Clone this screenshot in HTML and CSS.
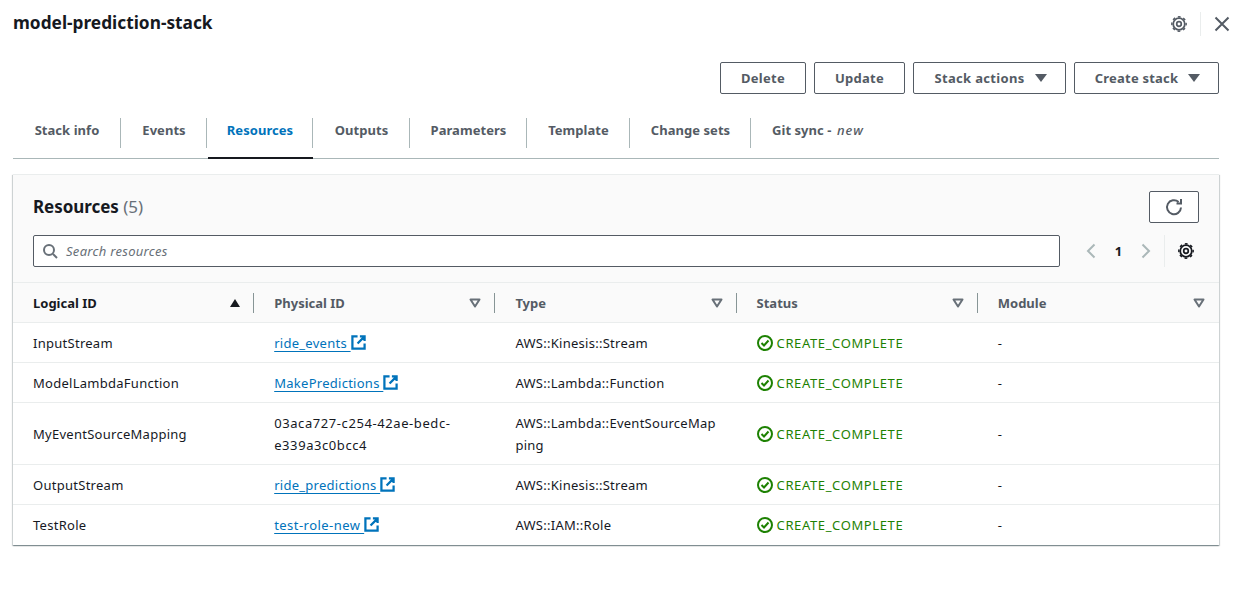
FILE: index.html
```html
<!DOCTYPE html>
<html lang="en">
  <head>
    <meta charset="utf-8" />
    <title>model-prediction-stack</title>
    <link rel="stylesheet" href="styles.css">
  </head>
  <body>
    <svg class="defs" width="0" height="0">
      <symbol id="gear" viewBox="0 0 16 16">
        <circle cx="8" cy="8" r="5.800" fill="none" stroke="currentColor" stroke-width="1.800"/>
        <circle cx="8" cy="8" r="7.200" fill="none" stroke="currentColor" stroke-width="1.400" stroke-dasharray="2.800 2.855" stroke-dashoffset="1.400"/>
        <circle cx="8" cy="8" r="2.300" fill="none" stroke="currentColor" stroke-width="1.700"/>
      </symbol>
      <symbol id="external" viewBox="0 0 16 16">
        <path d="M7 1.500H1.500v13h13V9M9.500 1.500h5v5M14 2L7 9" fill="none" stroke="currentColor" stroke-width="2.400"/>
      </symbol>
      <symbol id="status-ok" viewBox="0 0 16 16">
        <circle cx="8" cy="8" r="7" fill="none" stroke="currentColor" stroke-width="2"/>
        <path d="M4.500 8l2.500 2.500 4.500-5" fill="none" stroke="currentColor" stroke-width="2"/>
      </symbol>
      <symbol id="filter" viewBox="0 0 12 10">
        <path d="M1.500 1.500h9L6 8.500z" fill="none" stroke="currentColor" stroke-width="2" stroke-linejoin="round"/>
      </symbol>
    </svg>

    <main class="page">
      <header class="top">
        <h1>model-prediction-stack</h1>
        <div class="top-icons">
          <svg class="icon-16"><use href="#gear"/></svg>
          <span class="top-sep"></span>
          <svg class="close" viewBox="0 0 16 16"><path d="M1.500 1.500l13 13M14.500 1.500l-13 13" fill="none" stroke="currentColor" stroke-width="2"/></svg>
        </div>
      </header>

      <div class="actions">
        <button class="btn btn-delete">Delete</button>
        <button class="btn btn-update">Update</button>
        <button class="btn btn-stack">Stack actions <span class="caret"></span></button>
        <button class="btn btn-create">Create stack <span class="caret"></span></button>
      </div>

      <nav class="tabs">
        <a class="tab" style="width:108px">Stack info</a>
        <a class="tab" style="width:86px">Events</a>
        <a class="tab active" style="width:106px">Resources</a>
        <a class="tab" style="width:97px">Outputs</a>
        <a class="tab" style="width:117px">Parameters</a>
        <a class="tab" style="width:103px">Template</a>
        <a class="tab" style="width:121px">Change sets</a>
        <a class="tab">Git sync - <em>new</em></a>
      </nav>

      <section class="card">
        <div class="card-head">
          <div class="title-row">
            <h2>Resources <span class="count">(5)</span></h2>
            <button class="btn-refresh">
              <svg class="refresh" viewBox="0 0 18 18"><path d="M16 9.500a7 7 0 1 1-2.400-5.600M16 1v4.500h-4.500" fill="none" stroke="currentColor" stroke-width="2"/></svg>
            </button>
          </div>
          <div class="search-row">
            <label class="search">
              <svg class="search-icon" viewBox="0 0 16 16"><circle cx="7" cy="7" r="5" fill="none" stroke="currentColor" stroke-width="2"/><path d="M11 11l4 4" fill="none" stroke="currentColor" stroke-width="2"/></svg>
              <span>Search resources</span>
            </label>
            <div class="pager">
              <svg class="chevron" viewBox="0 0 10 16"><path d="M8.500 1.500L2 8l6.500 6.500" fill="none" stroke="currentColor" stroke-width="2"/></svg>
              <b>1</b>
              <svg class="chevron" viewBox="0 0 10 16"><path d="M1.500 1.500L8 8l-6.500 6.500" fill="none" stroke="currentColor" stroke-width="2"/></svg>
              <span class="pager-sep"></span>
              <svg class="icon-16"><use href="#gear"/></svg>
            </div>
          </div>
        </div>

        <table class="resources">
          <thead>
            <tr>
              <th class="sorted"><div>Logical ID <span class="sort-up"></span></div></th>
              <th><div>Physical ID <svg class="filter"><use href="#filter"/></svg></div></th>
              <th><div>Type <svg class="filter"><use href="#filter"/></svg></div></th>
              <th><div>Status <svg class="filter"><use href="#filter"/></svg></div></th>
              <th class="last"><div>Module <svg class="filter"><use href="#filter"/></svg></div></th>
            </tr>
          </thead>
          <tbody>
            <tr>
              <td>InputStream</td>
              <td><a class="link">ride_events <svg><use href="#external"/></svg></a></td>
              <td>AWS::Kinesis::Stream</td>
              <td><span class="ok"><svg><use href="#status-ok"/></svg>CREATE_COMPLETE</span></td>
              <td>-</td>
            </tr>
            <tr>
              <td>ModelLambdaFunction</td>
              <td><a class="link">MakePredictions <svg><use href="#external"/></svg></a></td>
              <td>AWS::Lambda::Function</td>
              <td><span class="ok"><svg><use href="#status-ok"/></svg>CREATE_COMPLETE</span></td>
              <td>-</td>
            </tr>
            <tr>
              <td>MyEventSourceMapping</td>
              <td class="uuid">03aca727-c254-42ae-bedc-e339a3c0bcc4</td>
              <td>AWS::Lambda::EventSourceMapping</td>
              <td><span class="ok"><svg><use href="#status-ok"/></svg>CREATE_COMPLETE</span></td>
              <td>-</td>
            </tr>
            <tr>
              <td>OutputStream</td>
              <td><a class="link">ride_predictions <svg><use href="#external"/></svg></a></td>
              <td>AWS::Kinesis::Stream</td>
              <td><span class="ok"><svg><use href="#status-ok"/></svg>CREATE_COMPLETE</span></td>
              <td>-</td>
            </tr>
            <tr>
              <td>TestRole</td>
              <td><a class="link link-role">test-role-new <svg><use href="#external"/></svg></a></td>
              <td>AWS::IAM::Role</td>
              <td><span class="ok"><svg><use href="#status-ok"/></svg>CREATE_COMPLETE</span></td>
              <td>-</td>
            </tr>
          </tbody>
        </table>
      </section>
    </main>
  </body>
</html>
```
FILE: styles.css
```css
* {
  box-sizing: border-box;
}

body {
  margin: 0;
  background: #fff;
  color: #16191f;
  font-family: "Noto Sans", sans-serif;
  font-size: 13px;
  line-height: 22px;
}

.defs {
  position: absolute;
}

.page {
  width: 1250px;
  height: 590px;
  overflow: hidden;
  padding: 0 31px 0 13px;
}

.top {
  height: 47px;
  display: flex;
  justify-content: space-between;
  align-items: center;
}

.top h1 {
  margin: 0;
  padding-bottom: 1px;
  font-size: 17.3px;
  font-weight: 700;
  line-height: 24px;
}

.top-icons {
  display: flex;
  align-items: center;
  color: #545b64;
  margin-right: -11px;
}

.icon-16 {
  width: 16px;
  height: 16px;
  display: block;
}

.top-sep {
  width: 1px;
  height: 24px;
  background: #eaeded;
  margin: 0 13px;
}

.close {
  width: 16px;
  height: 16px;
  display: block;
}

.actions {
  height: 32px;
  margin-top: 15px;
  display: flex;
  justify-content: flex-end;
  gap: 8px;
}

.btn {
  height: 32px;
  border: 1px solid #545b64;
  border-radius: 2px;
  background: #fff;
  color: #545b64;
  font: 700 13px "Noto Sans", sans-serif;
  letter-spacing: 0.25px;
  padding: 0;
  display: flex;
  align-items: center;
  justify-content: center;
  gap: 10px;
}

.btn-delete {
  width: 86px;
}

.btn-update {
  width: 91px;
}

.btn-stack {
  width: 153px;
  padding-left: 2px;
  letter-spacing: 0.32px;
}

.btn-create {
  width: 145px;
  padding-left: 2px;
  letter-spacing: 0.2px;
}

.caret {
  width: 0;
  height: 0;
  border-left: 6px solid transparent;
  border-right: 6px solid transparent;
  border-top: 8px solid #545b64;
}

.tabs {
  height: 50px;
  margin-top: 15px;
  border-bottom: 1px solid #aab7b8;
  display: flex;
  padding-top: 1px;
}

.tab {
  position: relative;
  height: 49px;
  padding-bottom: 10px;
  display: flex;
  align-items: center;
  justify-content: center;
  color: #545b64;
  font-weight: 700;
  letter-spacing: 0.05px;
  white-space: pre;
}

.tab::after {
  content: "";
  position: absolute;
  right: 0;
  top: 8px;
  height: 30px;
  width: 1px;
  background: #aab7b8;
}

.tab:last-child {
  padding-left: 21px;
}

.tab:last-child::after {
  display: none;
}

.tab em {
  font-weight: 500;
  font-style: italic;
  letter-spacing: 1.1px;
  margin-left: 2px;
}

.tab.active {
  color: #0073bb;
}

.tab.active::before {
  content: "";
  position: absolute;
  left: 1px;
  right: 0;
  bottom: 0;
  height: 2px;
  background: #16191f;
}

.card {
  margin-top: 15px;
  height: 371px;
  border-top: 1px solid #eaeded;
  box-shadow: 0 1px 1px 0 rgba(0, 28, 36, 0.3), 1px 1px 1px 0 rgba(0, 28, 36, 0.15), -1px 1px 1px 0 rgba(0, 28, 36, 0.15);
  background: #fff;
}

.card-head {
  height: 107px;
  background: #fafafa;
  padding: 15px 20px 0;
}

.title-row {
  height: 33px;
  display: flex;
  justify-content: space-between;
  align-items: center;
}

.title-row h2 {
  margin: 0;
  font-size: 17px;
  font-weight: 700;
  letter-spacing: -0.05px;
  line-height: 30px;
}

.count {
  font-weight: 400;
  color: #687078;
}

.btn-refresh {
  width: 50px;
  height: 32px;
  border: 1px solid #545b64;
  border-radius: 2px;
  background: #fff;
  color: #545b64;
  display: flex;
  align-items: center;
  justify-content: center;
  padding: 0;
}

.refresh {
  width: 18px;
  height: 18px;
}

.search-row {
  margin-top: 12px;
  display: flex;
  align-items: center;
}

.search {
  width: 1027px;
  height: 32px;
  border: 1px solid #545b64;
  border-radius: 2px;
  background: #fff;
  display: flex;
  align-items: center;
  padding-left: 8px;
  color: #687078;
  font-style: italic;
  letter-spacing: 0.3px;
}

.search-icon {
  width: 16px;
  height: 16px;
  color: #687078;
  margin-right: 8px;
}

.pager {
  margin-left: 26px;
  display: flex;
  align-items: center;
}

.pager b {
  width: 45px;
  text-align: center;
  font-size: 13px;
}

.chevron {
  width: 10px;
  height: 16px;
  color: #aab7b8;
}

.pager-sep {
  width: 1px;
  height: 32px;
  background: #eaeded;
  margin: 0 13px;
}

.resources {
  width: 100%;
  table-layout: fixed;
  border-collapse: collapse;
}

.resources th {
  height: 40px;
  padding: 0;
  background: #fafafa;
  border-top: 1px solid #eaeded;
  border-bottom: 1px solid #eaeded;
  text-align: left;
  color: #545b64;
  font-weight: 700;
}

.resources th div {
  height: 20px;
  display: flex;
  align-items: center;
  justify-content: space-between;
  padding: 0 13px 0 20px;
  border-right: 1px solid #879596;
}

.resources th.last div {
  padding-right: 14px;
  border-right: 0;
}

.resources th.sorted {
  color: #16191f;
}

.sort-up {
  width: 0;
  height: 0;
  border-left: 5.5px solid transparent;
  border-right: 5.5px solid transparent;
  border-bottom: 8px solid #16191f;
}

.filter {
  width: 12px;
  height: 10px;
  color: #687078;
}

.resources td {
  padding: 9px 20px 8px;
  border-bottom: 1px solid #eaeded;
  vertical-align: middle;
  overflow-wrap: anywhere;
  letter-spacing: 0.27px;
}

.resources td.uuid {
  letter-spacing: 0.58px;
}

.resources tbody tr:last-child td {
  border-bottom: 0;
}

.link {
  color: #0073bb;
  text-decoration: underline;
  text-underline-offset: 3px;
}

.link-role {
  letter-spacing: 0.45px;
}

.link svg {
  width: 15px;
  height: 15px;
  vertical-align: -2px;
  background: #fff;
}

.ok {
  display: flex;
  align-items: center;
  color: #1d8102;
  letter-spacing: 0.62px;
}

.ok svg {
  width: 16px;
  height: 16px;
  margin-right: 4px;
}
```
